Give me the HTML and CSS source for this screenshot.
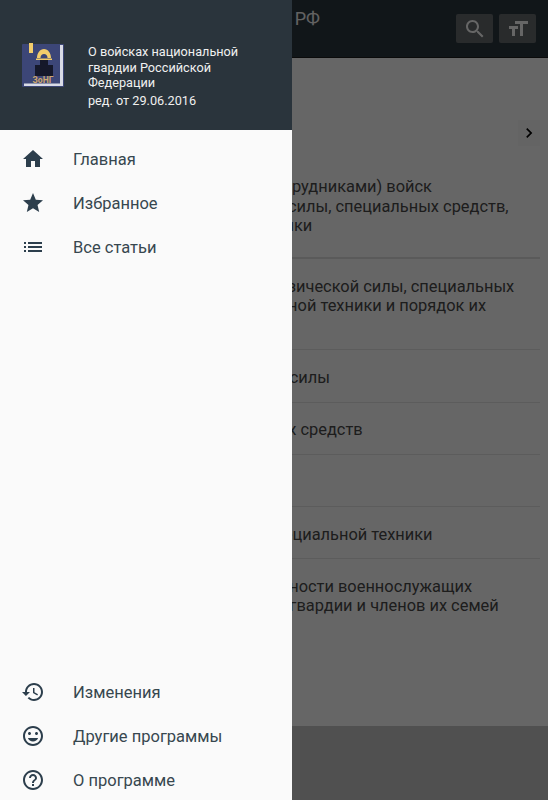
FILE: index.html
```html
<!DOCTYPE html>
<html lang="ru">
<head>
<meta charset="utf-8">
<title>ЗоНГ РФ</title>
<link rel="stylesheet" href="styles.css">
</head>
<body>
<div class="app">
  <header class="topbar">
    <h1 class="title">О войсках национальной гвардии РФ</h1>
    <button class="tool"><svg viewBox="0 0 24 24"><path d="M15.5 14h-.79l-.28-.27C15.41 12.59 16 11.11 16 9.5 16 5.91 13.09 3 9.5 3S3 5.91 3 9.5 5.91 16 9.5 16c1.61 0 3.09-.59 4.23-1.57l.27.28v.79l5 4.99L20.49 19l-4.99-5zm-6 0C7.01 14 5 11.99 5 9.5S7.01 5 9.5 5 14 7.01 14 9.5 11.99 14 9.5 14z"/></svg></button>
    <button class="tool"><svg viewBox="0 0 24 24"><path d="M9 4v3h5v12h3V7h5V4H9zm-6 8h3v7h3v-7h3V9H3v3z"/></svg></button>
  </header>
  <main class="content">
    <div class="pager">
      <span class="next"><svg viewBox="0 0 24 24"><path d="M10 6L8.59 7.41 13.17 12l-4.58 4.59L10 18l6-6z"/></svg></span>
    </div>
    <section class="chapter">Применение военнослужащими (сотрудниками) войск<br>национальной гвардии физической силы, специальных средств,<br>оружия, боевой и специальной техники</section>
    <ul class="articles">
      <li>Статья 18. Порядок: применения физической силы, специальных<br>средств, оружия, боевой и специальной техники и порядок их<br>применения</li>
      <li>Статья 19. Применение физической силы</li>
      <li>Статья 20. Применение специальных средств</li>
      <li>Статья 21. Применение оружия</li>
      <li>Статья 22. Применение боевой и специальной техники</li>
      <li class="last">Статья 23. Гарантии личной безопасности военнослужащих<br>и сотрудников войск национальной гвардии и членов их семей</li>
    </ul>
  </main>
  <footer class="strip"></footer>
</div>
<div class="scrim"></div>
<aside class="drawer">
  <div class="drawer-head">
    <svg class="logo" viewBox="0 0 42 44">
      <rect x="0" y="1" width="42" height="43" rx="1" fill="#3c4677"/>
      <rect x="38" y="2" width="3" height="40" fill="#d9dbe6"/>
      <rect x="2" y="40.500" width="39" height="2.500" fill="#d9dbe6"/>
      <path d="M7 0h4v10H7z" fill="#f3cd6b"/>
      <path d="M15 15c0-5 3-9 7-9s7 4 7 9h-3.500c0-2.500-1.500-4-3.500-4s-3.500 1.500-3.500 4z" fill="#f3cd6b"/>
      <rect x="14" y="15.500" width="16" height="1.500" fill="#f3cd6b"/>
      <path d="M18 17h8v5h5v11H13V22h5z" fill="#15182a"/>
      <text x="21" y="39.500" class="logo-text">ЗоНГ</text>
    </svg>
    <div class="drawer-info">
      <p class="law">О войсках национальной гвардии Российской Федерации</p>
      <p class="edition">ред. от 29.06.2016</p>
    </div>
  </div>
  <nav class="menu">
    <a class="item"><svg viewBox="0 0 24 24"><path d="M10 20v-6h4v6h5v-8h3L12 3 2 12h3v8z"/></svg><span>Главная</span></a>
    <a class="item"><svg viewBox="0 0 24 24"><path d="M12 17.270L18.180 21l-1.640-7.030L22 9.240l-7.190-.610L12 2 9.190 8.630 2 9.240l5.460 4.730L5.820 21z"/></svg><span>Избранное</span></a>
    <a class="item"><svg viewBox="0 0 24 24"><path d="M3 13h2v-2H3v2zm0 4h2v-2H3v2zm0-8h2V7H3v2zm4 4h14v-2H7v2zm0 4h14v-2H7v2zM7 7v2h14V7H7z"/></svg><span>Все статьи</span></a>
  </nav>
  <nav class="menu menu-bottom">
    <a class="item"><svg viewBox="0 0 24 24"><path d="M13 3c-4.970 0-9 4.030-9 9H1l3.890 3.890.070.140L9 12H6c0-3.870 3.130-7 7-7s7 3.130 7 7-3.130 7-7 7c-1.930 0-3.680-.790-4.940-2.060l-1.420 1.420C8.270 19.990 10.510 21 13 21c4.970 0 9-4.030 9-9s-4.030-9-9-9zm-1 5v5l4.280 2.540.720-1.210-3.500-2.080V8H12z"/></svg><span>Изменения</span></a>
    <a class="item"><svg viewBox="0 0 24 24"><path d="M11.990 2C6.470 2 2 6.480 2 12s4.470 10 9.990 10C17.520 22 22 17.520 22 12S17.520 2 11.990 2zM12 20c-4.420 0-8-3.580-8-8s3.580-8 8-8 8 3.580 8 8-3.580 8-8 8zm3.500-9c.830 0 1.500-.670 1.500-1.500S16.330 8 15.500 8 14 8.670 14 9.500s.670 1.500 1.500 1.500zm-7 0c.830 0 1.500-.670 1.500-1.500S9.330 8 8.500 8 7 8.670 7 9.500 7.670 11 8.500 11zm3.500 6.500c2.330 0 4.310-1.460 5.110-3.500H6.890c.800 2.040 2.780 3.500 5.110 3.500z"/></svg><span>Другие программы</span></a>
    <a class="item"><svg viewBox="0 0 24 24"><path d="M11 18h2v-2h-2v2zm1-16C6.480 2 2 6.480 2 12s4.480 10 10 10 10-4.480 10-10S17.520 2 12 2zm0 18c-4.410 0-8-3.590-8-8s3.590-8 8-8 8 3.590 8 8-3.590 8-8 8zm0-14c-2.210 0-4 1.790-4 4h2c0-1.100.900-2 2-2s2 .900 2 2c0 2-3 1.750-3 5h2c0-2.250 3-2.500 3-5 0-2.210-1.790-4-4-4z"/></svg><span>О программе</span></a>
  </nav>
</aside>
</body>
</html>
```

FILE: styles.css
```css
* { box-sizing: border-box; }
html, body { margin: 0; height: 100%; overflow: hidden; }
body { font-family: Roboto, "Noto Sans", sans-serif; background: #fff; }

.app { height: 800px; display: flex; flex-direction: column; }

.topbar {
  height: 58px;
  flex: none;
  background: #2c3840;
  border-bottom: 1px solid #1c1c1c;
  display: flex;
  align-items: flex-start;
  padding: 14px 12px 0 0;
  gap: 6px;
}
.title {
  margin: -7px auto 0 0;
  width: 320px;
  text-align: right;
  font-size: 18px;
  font-weight: 400;
  line-height: 24px;
  color: #f4f4f4;
  white-space: nowrap;
}
.tool {
  width: 37px;
  height: 29px;
  padding: 0;
  border: 0;
  border-radius: 2px;
  background: #666b6e;
  display: flex;
  align-items: center;
  justify-content: center;
}
.tool svg { width: 24px; height: 24px; fill: #fff; }

.content { flex: 1; padding: 0 8px; overflow: hidden; color: #4a4a4a; font-size: 16.400px; line-height: 19.500px; }
.pager { height: 62px; padding-top: 62px; display: flex; justify-content: flex-end; align-items: flex-start; }
.next { width: 22px; height: 26px; flex: none; background: #fbfbfb; display: flex; align-items: center; justify-content: center; }
.next svg { width: 20px; height: 20px; fill: #000; }

.chapter { margin-top: 57px; padding: 0 0 21.500px; border-bottom: 2px solid #e2e2e2; white-space: nowrap; }
.articles { list-style: none; margin: 0; padding: 0; }
.articles li { padding: 17.500px 0 14.300px; border-bottom: 1px solid #e6e6e6; white-space: nowrap; }
.articles .last { border-bottom: 0; }

.strip { height: 74px; flex: none; background: #c8c8c8; }

.scrim { position: absolute; inset: 0; background: rgba(0, 0, 0, .6); }

.drawer {
  position: absolute;
  left: 0; top: 0; bottom: 0;
  width: 292px;
  background: #fafafa;
  display: flex;
  flex-direction: column;
}
.drawer-head {
  height: 130px;
  flex: none;
  background: #2a343c;
  display: flex;
  align-items: flex-start;
  padding: 44px 0 0 22px;
  gap: 24px;
  color: #f0f0f0;
  font-size: 12.700px;
  line-height: 15.500px;
}
.logo { width: 42px; height: 44px; flex: none; margin-top: -1px; }
.logo-text { font-family: Roboto, sans-serif; font-size: 8.500px; font-weight: 700; fill: #cda76d; text-anchor: middle; }
.law { margin: 0; width: 170px; }
.edition { margin: 2px 0 0; }

.menu { padding-top: 7px; display: flex; flex-direction: column; }
.menu-bottom { margin-top: auto; margin-bottom: -2px; padding-top: 0; }
.item {
  height: 44px;
  display: flex;
  align-items: center;
  padding-left: 21px;
  gap: 28px;
  color: #37474f;
  font-size: 16.500px;
}
.item svg { width: 24px; height: 24px; fill: #2c3e4c; flex: none; }
```
